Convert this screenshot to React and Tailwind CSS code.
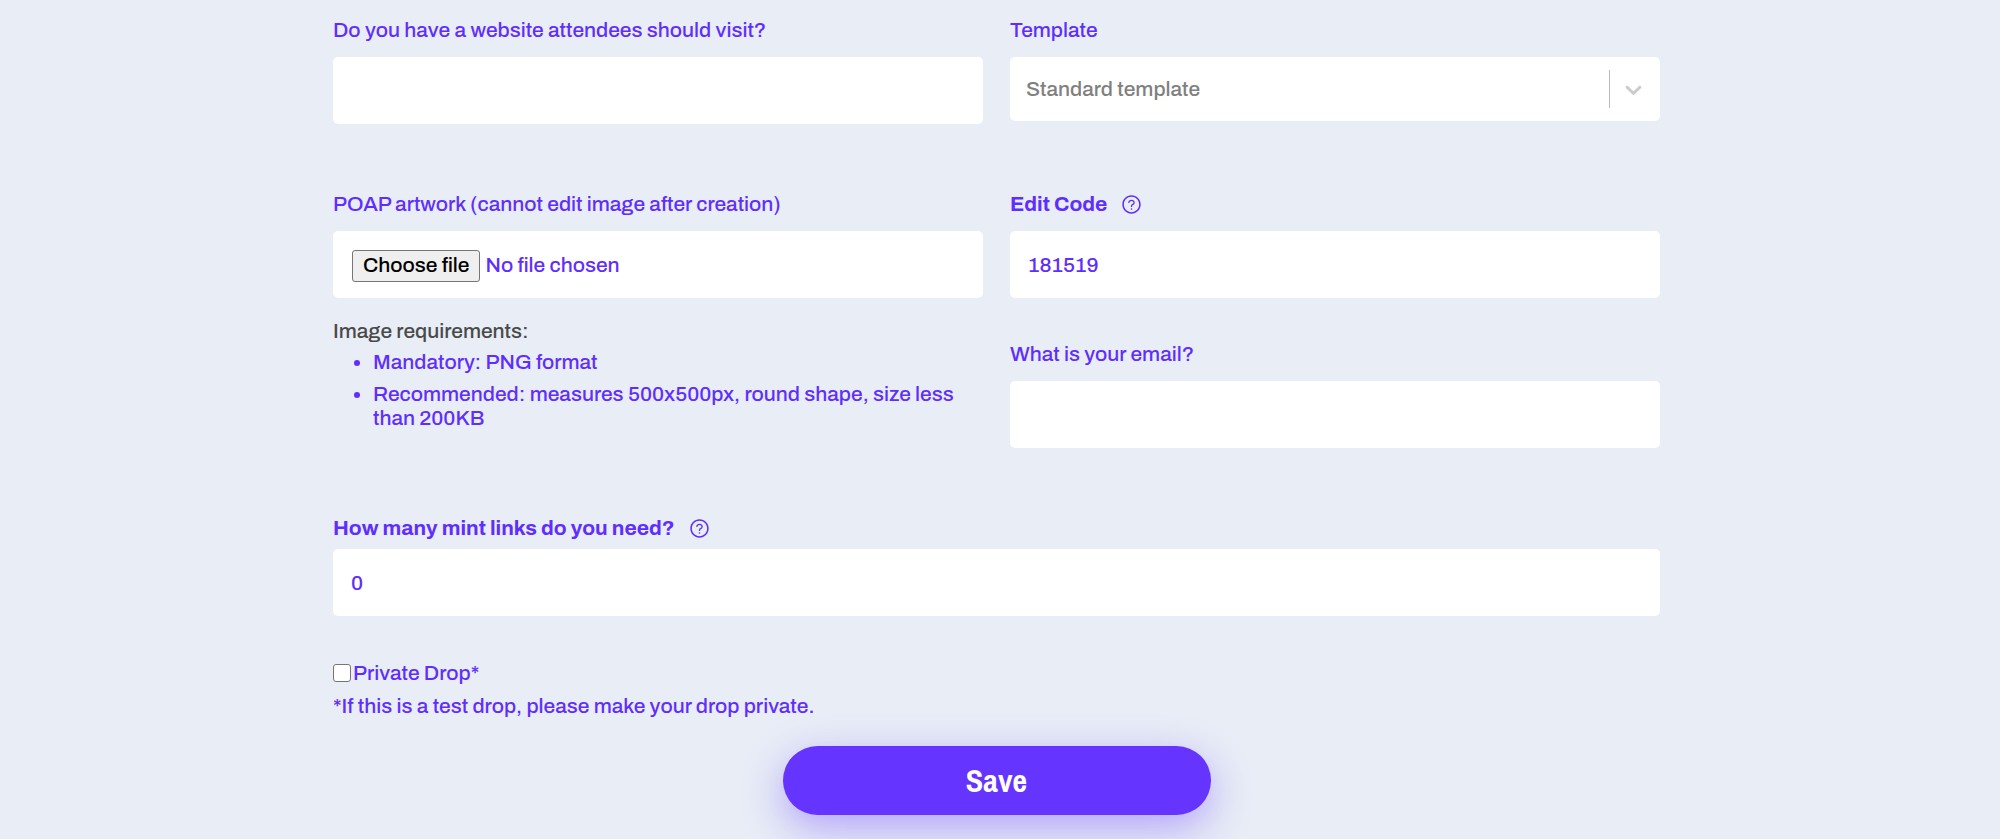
import React, { useRef, useState } from 'react';
import { AiOutlineQuestionCircle } from 'react-icons/ai';

const labelClass = 'text-[21px] leading-6';
const inputClass =
    'block w-full h-[67px] rounded-[5px] bg-white px-[18px] text-[21px] leading-6 text-[#5f2eff] outline-none';

const HelpButton = ({ label }) => (
    <button type="button" aria-label={label} className="ml-[14px] text-[21px] text-[#5f2eff]">
        <AiOutlineQuestionCircle />
    </button>
);

const TextField = ({ id, label, type = 'text', defaultValue = '', help, tight }) => (
    <div className={tight ? 'flex flex-col gap-[9px]' : 'flex flex-col gap-[15px]'}>
        <div className="flex h-6 items-center">
            <label htmlFor={id} className={`${labelClass} ${help ? 'font-bold' : ''}`}>{label}</label>
            {help && <HelpButton label={help} />}
        </div>
        <input id={id} name={id} type={type} defaultValue={defaultValue} className={inputClass} />
    </div>
);

const TemplateSelect = () => (
    <div className="flex flex-col gap-[15px]">
        <label htmlFor="template" className={labelClass}>Template</label>
        <div className="flex h-16 items-center rounded-[5px] bg-white pr-[13px]">
            <select
                id="template"
                name="template"
                className="h-full min-w-0 flex-1 appearance-none bg-transparent pb-px pl-4 text-[21px] leading-6 text-[#808080] outline-none"
            >
                <option>Standard template</option>
            </select>
            <span className="mr-[10px] h-[38px] w-px bg-[#bbb]" />
            <svg width="27" height="27" viewBox="0 0 20 20" fill="#ccc" aria-hidden="true">
                <path d="M4.516 7.548c0.436-0.446 1.043-0.481 1.576 0l3.908 3.747 3.908-3.747c0.533-0.481 1.141-0.446 1.574 0 0.436 0.445 0.408 1.197 0 1.615-0.406 0.418-4.695 4.502-4.695 4.502-0.217 0.223-0.502 0.335-0.787 0.335s-0.57-0.112-0.789-0.335c0 0-4.287-4.084-4.695-4.502s-0.436-1.17 0-1.615z" />
            </svg>
        </div>
    </div>
);

const ArtworkField = () => {
    const fileRef = useRef(null);
    const [fileName, setFileName] = useState('');

    return (
        <div>
            <div className="flex flex-col gap-[15px]">
                <label htmlFor="artwork" className={labelClass}>
                    POAP artwork (cannot edit image after creation)
                </label>
                <div className="flex h-[67px] items-center rounded-[5px] bg-white px-[19px] pt-[2px]">
                    <input
                        ref={fileRef}
                        id="artwork"
                        type="file"
                        accept="image/png"
                        className="hidden"
                        onChange={(e) => setFileName(e.target.files[0]?.name || '')}
                    />
                    <button
                        type="button"
                        onClick={() => fileRef.current.click()}
                        className="h-8 rounded-[3px] border border-[#767676] bg-[#efefef] px-[10px] pb-[2px] text-[21px] leading-6 text-black"
                    >
                        Choose file
                    </button>
                    <span className="ml-[5px] pb-[2px] text-[21px] leading-6">{fileName || 'No file chosen'}</span>
                </div>
            </div>

            <div className="mt-[21px] text-[21px] leading-6">
                <p className="text-[#4a4a4a]">Image requirements:</p>
                <ul className="mt-[7px] flex list-disc flex-col gap-2 pl-10">
                    <li>Mandatory: PNG format</li>
                    <li>Recommended: measures 500x500px, round shape, size less than 200KB</li>
                </ul>
            </div>
        </div>
    );
};

const App = () => (
    <main className="min-h-screen bg-[#e8edf6] pt-[18px] pr-[7px] pb-6 font-['Archivo','Liberation_Sans',Arial,sans-serif] font-medium text-[#5f2eff]">
        <form className="mx-auto max-w-[1327px]" onSubmit={(e) => e.preventDefault()}>
            <div className="grid grid-cols-2 gap-x-[27px] gap-y-[68px]">
                <TextField id="website" label="Do you have a website attendees should visit?" />
                <TemplateSelect />
                <ArtworkField />
                <div className="flex flex-col gap-11">
                    <TextField id="editCode" label="Edit Code" defaultValue="181519" help="About the edit code" />
                    <TextField id="email" type="email" label="What is your email?" />
                </div>
            </div>

            <div className="mt-[68px]">
                <TextField
                    id="mintLinks"
                    label="How many mint links do you need?"
                    defaultValue="0"
                    help="About mint links"
                    tight
                />
            </div>

            {/* Private drop */}
            <div className="mt-[45px] flex items-center gap-[2px]">
                <input
                    id="privateDrop"
                    type="checkbox"
                    className="size-[18px] appearance-none rounded-[3px] border border-[#767676] bg-white checked:bg-[#6534ff]"
                />
                <label htmlFor="privateDrop" className={labelClass}>Private Drop*</label>
            </div>
            <p className="mt-[9px] text-[21px] leading-6">
                *If this is a test drop, please make your drop private.
            </p>

            <div className="mt-7 flex justify-center">
                <button
                    type="submit"
                    className="h-[69px] w-[428px] rounded-full bg-[#6534ff] font-['Archivo_Narrow','Liberation_Sans_Narrow','Roboto_Condensed','Liberation_Sans',sans-serif] text-[32px] font-bold text-white shadow-[0_13px_40px_0_rgba(101,52,255,0.4)]"
                >
                    Save
                </button>
            </div>
        </form>
    </main>
);

export default App;
